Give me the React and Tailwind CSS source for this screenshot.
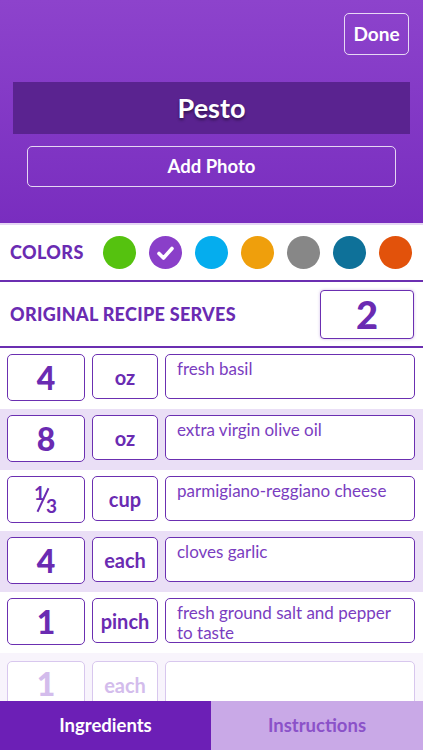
import React from "react";

const rows = [
  { q: "4", u: "oz", d: "fresh basil", bg: "bg-white" },
  { q: "8", u: "oz", d: "extra virgin olive oil", bg: "bg-[#eadff6]" },
  { q: "frac", u: "cup", d: "parmigiano-reggiano cheese", bg: "bg-white" },
  { q: "4", u: "each", d: "cloves garlic", bg: "bg-[#eadff6]" },
  { q: "1", u: "pinch", d: "fresh ground salt and pepper to taste", bg: "bg-white" },
];

const colors = ["bg-[#55c20f]", "bg-[#8a3fc9]", "bg-[#05adee]", "bg-[#ef9f0c]", "bg-[#878787]", "bg-[#0e7199]", "bg-[#e2520b]"];

function Qty({ q }) {
  if (q === "frac")
    return (
      <span className="relative inline-block w-[26px] h-[34px] text-[#6a2bb2]">
        <span className="absolute left-[1px] top-[0px] text-[19px] font-bold leading-none">1</span>
        <span className="absolute left-[9px] top-[4px] w-[2px] h-[26px] bg-[#6a2bb2] rotate-[25deg]"></span>
        <span className="absolute left-[13px] top-[13px] text-[19px] font-bold leading-none">3</span>
      </span>
    );
  return <span>{q}</span>;
}

export default function App() {
  return (
    <div className="w-[423px] h-[750px] overflow-hidden flex flex-col bg-white" style={{ fontFamily: "Lato, 'Open Sans', sans-serif" }}>
      <div className="h-[223px] shrink-0 bg-gradient-to-b from-[#8d43cc] to-[#792dbf] flex flex-col">
        <div className="flex justify-end pt-[13px] pr-[14px]">
          <div className="w-[65px] h-[42px] border-[1.5px] border-white/80 rounded-[5px] flex items-center justify-center text-white text-[19px] font-bold">Done</div>
        </div>
        <div className="mt-[27px] mx-[13px] h-[52px] bg-[#5a2390] flex items-center justify-center text-white text-[27px] font-bold" style={{ textShadow: "0 2px 3px rgba(0,0,0,0.45)" }}>Pesto</div>
        <div className="mt-[12px] mx-[27px] h-[41px] border-[1.5px] border-white/80 rounded-[5px] flex items-center justify-center text-white text-[18.5px] font-bold">Add Photo</div>
      </div>
      <div className="h-[2px] shrink-0 bg-[#e6d6f4]"></div>
      <div className="h-[57px] shrink-0 border-b-2 border-[#6b2fb1] flex items-center pl-[10px]">
        <span className="text-[#6a2bb2] text-[18px] font-black tracking-[0.4px] w-[93px]">COLORS</span>
        <div className="flex gap-[13px]">
          {colors.map((c, i) => (
            <div key={i} className={`w-[33px] h-[33px] rounded-full ${c} flex items-center justify-center`}>
              {i === 1 && (
                <svg width="19" height="16" viewBox="0 0 19 16"><path d="M3 8.5 L7.5 13 L16 3.5" stroke="white" strokeWidth="3.6" fill="none" strokeLinecap="round" strokeLinejoin="round" /></svg>
              )}
            </div>
          ))}
        </div>
      </div>
      <div className="h-[66px] shrink-0 border-b-2 border-[#6b2fb1] flex items-center justify-between pl-[10px] pr-[9px]">
        <span className="text-[#6a2bb2] text-[18px] font-black tracking-[0.3px]">ORIGINAL RECIPE SERVES</span>
        <div className="w-[94px] h-[49px] border-[1.5px] border-[#6b2fb1] rounded-[4px] flex items-center justify-center text-[#6a2bb2] text-[38px] font-black shadow-[0_0_3px_rgba(120,60,190,0.35)]">2</div>
      </div>
      <div className="flex-1 overflow-hidden relative">
        {rows.map((r, i) => (
          <div key={i} className={`h-[61px] ${r.bg} flex items-start pt-[6px] pl-[7px] pr-[8px] gap-[7px]`}>
            <div className="w-[78px] h-[47px] bg-white border-[1.5px] border-[#6b2fb1] rounded-[5px] flex items-center justify-center text-[#6a2bb2] text-[32px] font-black leading-none">
              <Qty q={r.q} />
            </div>
            <div className="w-[66px] h-[45px] bg-white border-[1.5px] border-[#6b2fb1] rounded-[5px] flex items-center justify-center text-[#6a2bb2] text-[20px] font-bold">{r.u}</div>
            <div className="flex-1 h-[45px] bg-white border-[1.5px] border-[#6b2fb1] rounded-[5px] pl-[11px] pr-[8px] pt-[4px] text-[#7a3dc0] text-[17px] leading-[20px]">{r.d}</div>
          </div>
        ))}
        <div className="h-[61px] bg-[#f8f4fc] flex items-start pt-[8px] pl-[7px] pr-[8px] gap-[7px]">
          <div className="w-[78px] h-[47px] border-[1.5px] border-[#d8c7ee] rounded-[5px] bg-white flex items-start pt-[6px] justify-center text-[#d3bcec] text-[32px] font-black leading-none">1</div>
          <div className="w-[66px] h-[45px] border-[1.5px] border-[#d8c7ee] rounded-[5px] bg-white flex items-start pt-[8px] justify-center text-[#d3bcec] text-[20px] font-bold">each</div>
          <div className="flex-1 h-[45px] border-[1.5px] border-[#d8c7ee] rounded-[5px] bg-white"></div>
        </div>
      </div>
      <div className="h-[49px] shrink-0 flex">
        <div className="w-[211px] bg-[#6c1fb6] flex items-center justify-center text-white text-[18.5px] font-bold">Ingredients</div>
        <div className="flex-1 bg-[#c9a9e7] flex items-center justify-center text-[#8b52c9] text-[18.5px] font-bold">Instructions</div>
      </div>
    </div>
  );
}
